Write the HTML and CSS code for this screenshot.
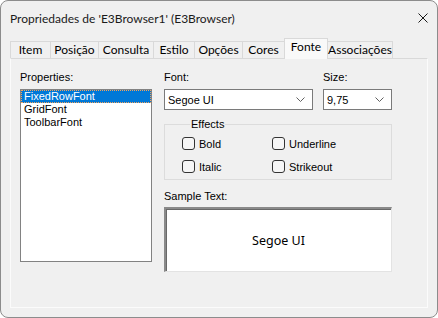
FILE: index.html
```html
<!DOCTYPE html>
<html lang="pt">
<head>
<meta charset="UTF-8" />
<title>Propriedades de 'E3Browser1' (E3Browser)</title>
<link rel="stylesheet" href="styles.css">
</head>
<body>
  <div class="window">
    <div class="titlebar">
      <span class="title">Propriedades de 'E3Browser1' (E3Browser)</span>
      <svg class="close" width="10" height="10" viewBox="0 0 10 10">
        <path d="M0.5 0.5 L9.5 9.5 M9.5 0.5 L0.5 9.5" stroke="#1a1a1a" stroke-width="1" fill="none" />
      </svg>
    </div>

    <div class="tabs">
      <div class="tab">Item</div>
      <div class="tab">Posição</div>
      <div class="tab">Consulta</div>
      <div class="tab">Estilo</div>
      <div class="tab">Opções</div>
      <div class="tab">Cores</div>
      <div class="tab active">Fonte</div>
      <div class="tab">Associações</div>
    </div>

    <div class="panel">
      <div class="left-col">
        <div class="label">Properties:</div>
        <ul class="listbox">
          <li class="selected">FixedRowFont</li>
          <li>GridFont</li>
          <li>ToolbarFont</li>
        </ul>
      </div>

      <div class="right-col">
        <div class="combo-row">
          <div class="field font-field">
            <div class="label">Font:</div>
            <div class="combo">
              <span>Segoe UI</span>
              <svg class="chevron" width="9" height="5" viewBox="0 0 9 5"><path d="M0.5 0.5 L4.5 4.5 L8.5 0.5" stroke="#606060" fill="none" /></svg>
            </div>
          </div>
          <div class="field size-field">
            <div class="label">Size:</div>
            <div class="combo">
              <span>9,75</span>
              <svg class="chevron" width="9" height="5" viewBox="0 0 9 5"><path d="M0.5 0.5 L4.5 4.5 L8.5 0.5" stroke="#606060" fill="none" /></svg>
            </div>
          </div>
        </div>

        <fieldset class="effects">
          <legend>Effects</legend>
          <div class="checks">
            <label class="check"><span class="box"></span>Bold</label>
            <label class="check"><span class="box"></span>Underline</label>
            <label class="check"><span class="box"></span>Italic</label>
            <label class="check"><span class="box"></span>Strikeout</label>
          </div>
        </fieldset>

        <div class="label sample-label">Sample Text:</div>
        <div class="sample">Segoe UI</div>
      </div>
    </div>
  </div>
</body>
</html>
```

FILE: styles.css
```css
/* Base */
* {
  box-sizing: border-box;
}
html, body {
  margin: 0;
  background: #ffffff;
}

/* Window frame */
.window {
  width: 438px;
  height: 318px;
  border: 1px solid #8c8c8c;
  border-radius: 8px;
  background: #f0f0f0;
  overflow: hidden;
  font-family: "Liberation Sans", Arial, sans-serif;
  font-size: 11px;
  color: #000;
}

/* Title bar */
.titlebar {
  height: 37px;
  display: flex;
  align-items: center;
  justify-content: space-between;
  padding: 0 9px 2px 9px;
}
.title {
  font-family: Lato, "Noto Sans", sans-serif;
  font-size: 12px;
  color: #1a1a1a;
}
.close {
  margin-top: -2px;
}

/* Tabs */
.tabs {
  display: flex;
  align-items: flex-end;
  height: 20px;
  margin-left: 9px;
  position: relative;
  z-index: 1;
}
.tab {
  height: 17px;
  display: flex;
  align-items: center;
  justify-content: center;
  padding: 0 0 1px;
  border: 1px solid #d9d9d9;
  border-bottom: none;
  border-right: none;
  background: #f0f0f0;
  font-family: Lato, "Noto Sans", sans-serif;
  font-size: 12px;
  color: #000;
  white-space: nowrap;
}
.tab:nth-child(1) { width: 40px; }
.tab:nth-child(2) { width: 48px; }
.tab:nth-child(3) { width: 55px; }
.tab:nth-child(4) { width: 41px; }
.tab:nth-child(5) { width: 48px; }
.tab:nth-child(6) { width: 42px; }
.tab:nth-child(7) { width: 44px; }
.tab:nth-child(8) { width: 65px; border-right: 1px solid #d9d9d9; }

.tab.active {
  height: 21px;
  margin-bottom: -1px;
  padding-bottom: 5px;
  background: #f9f9f9;
  border-right: 1px solid #d9d9d9;
}
.tab.active + .tab {
  border-left: none;
}

/* Tab page */
.panel {
  margin: 0 9px;
  height: 250px;
  border: 1px solid #d9d9d9;
  border-bottom-color: #fbfbfb;
  border-left-color: #fbfbfb;
  border-right-color: #fbfbfb;
  display: flex;
  gap: 12px;
  padding: 12px 0 0 9px;
}

.label {
  height: 13px;
  line-height: 13px;
  margin-bottom: 5px;
  color: #000;
}

/* Properties list */
.left-col {
  width: 132px;
}
.listbox {
  list-style: none;
  margin: 0;
  padding: 0;
  height: 173px;
  background: #fff;
  border: 1px solid #828282;
}
.listbox li {
  height: 13px;
  line-height: 13px;
  padding-left: 3px;
  white-space: nowrap;
}
.listbox li.selected {
  background: #0078d7;
  color: #fff;
  outline: 1px dotted #f3a35c;
  outline-offset: -1px;
}

/* Right side */
.right-col {
  width: 228px;
}
.combo-row {
  display: flex;
  gap: 10px;
}
.font-field { width: 149px; }
.size-field { width: 69px; }
.combo {
  height: 21px;
  border: 1px solid #7a7a7a;
  background: #fff;
  display: flex;
  align-items: center;
  justify-content: space-between;
  padding: 0 7px 0 3px;
}
.chevron {
  display: block;
}

/* Effects group */
.effects {
  margin: 8px 0 0;
  padding: 0 0 6px 17px;
  width: 228px;
  border: 1px solid #dcdcdc;
  min-width: 0;
}
.effects legend {
  margin-left: 8px;
  padding: 0 1px;
  height: 13px;
  line-height: 13px;
}
.checks {
  display: grid;
  grid-template-columns: 90px 90px;
  row-gap: 10px;
  margin-top: 6px;
}
.check {
  display: flex;
  align-items: center;
  height: 13px;
  gap: 4px;
}
.box {
  width: 13px;
  height: 13px;
  border: 1px solid #333;
  border-radius: 3px;
  background: #f6f6f6;
}

/* Sample text */
.sample-label {
  margin-top: 10px;
  margin-bottom: 4px;
}
.sample {
  height: 65px;
  background: #fff;
  border-top: 2px solid #8a8a8a;
  border-left: 2px solid #8a8a8a;
  border-right: 1px solid #e3e3e3;
  border-bottom: 1px solid #e3e3e3;
  box-shadow: inset 1px 1px 0 #696969;
  display: flex;
  align-items: center;
  justify-content: center;
  font-family: "Noto Sans", sans-serif;
  font-size: 12.5px;
  color: #000;
}
```
